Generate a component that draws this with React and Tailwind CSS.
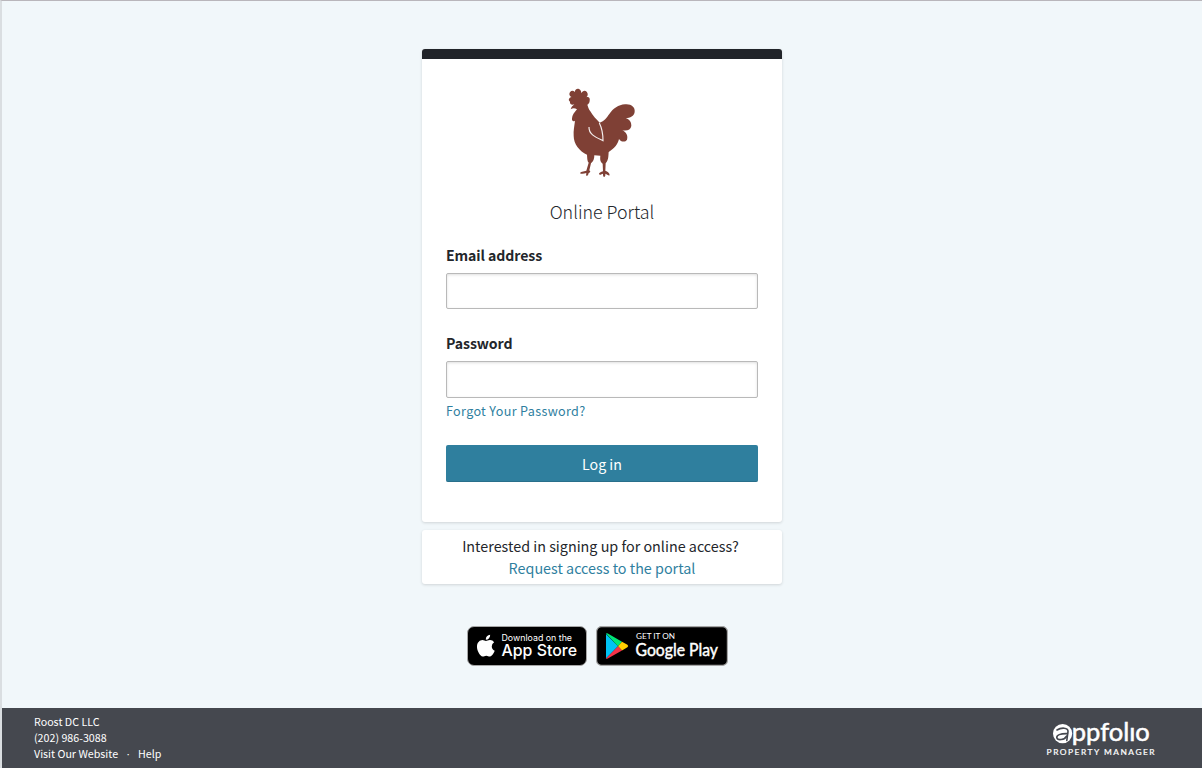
function Rooster() {
  return (
    <svg className="mx-auto block h-[110px] w-[100px]" viewBox="0 0 300 330" aria-label="Roost DC">
      <path
        fill="#7f4035"
        d="M56 94 C58 87 61 84 67 79 C59 83 53 77 54 71 C48 67 50 59 59 57 C52 54 50 46 55 41 C59 37 65 38 68 42 C70 34 75 31 81 33 C86 35 88 40 88 46 C91 38 99 36 104 41 C109 47 108 54 103 58 C110 55 115 61 113 68 C113 74 109 78 106 80 C108 86 110 94 115 100 C123 114 133 124 143 134 C157 130 164 119 172 108 C184 91 199 81 219 79 C237 77 250 87 248 102 C246 115 235 120 221 120 C232 123 239 133 238 144 C236 155 226 160 211 157 C223 162 229 175 225 185 C220 194 206 192 201 183 C198 198 188 211 170 222 C169 234 170 246 161 256 L160 278 C167 281 173 285 173 292 C168 293 165 289 160 287 C161 292 159 296 156 297 C153 295 153 291 153 287 C149 288 145 292 141 289 C140 284 147 282 153 280 L152 257 C144 250 144 244 145 233 L127 232 C127 243 124 251 117 256 L112 277 C117 281 115 284 110 285 C109 290 107 294 104 294 C101 291 103 288 103 285 C97 287 90 289 84 286 C84 281 95 281 103 278 L110 254 C105 248 106 240 105 230 C82 219 65 198 65 173 C64 157 67 145 69 128 C63 132 59 128 60 121 C61 112 66 104 75 94 C67 89 61 91 56 94 Z"
      />
      <path d="M111 147 C110 170 132 178 153 188 C153 168 150 151 142 135" fill="none" stroke="#f4eeee" strokeWidth="3.5" />
    </svg>
  );
}

function Field({ label, type, className }) {
  return (
    <label className="block">
      <span className="block h-[29px] text-[14.1px] leading-[22px] font-semibold tracking-[-0.08px]">{label}</span>
      <input
        type={type}
        className={"block w-full rounded-xs border border-[#b9b9b9] bg-white px-2 shadow-[inset_0_1px_3px_rgba(0,0,0,0.13)] outline-none " + className}
      />
    </label>
  );
}

function AppStoreBadge() {
  return (
    <svg className="h-10 w-[120px]" viewBox="0 0 120 40" aria-label="Download on the App Store">
      <rect x="0.5" y="0.5" width="119" height="39" rx="6.5" fill="#000" stroke="#a6a6a6" />
      <g fill="#fff">
        <path d="M24.77 20.3a4.95 4.95 0 0 1 2.36-4.15 5.07 5.07 0 0 0-3.99-2.16c-1.68-.18-3.31 1-4.16 1-.87 0-2.19-.98-3.61-.95a5.32 5.32 0 0 0-4.47 2.73c-1.94 3.34-.5 8.27 1.35 10.98.93 1.33 2.01 2.81 3.43 2.76 1.39-.06 1.91-.88 3.58-.88 1.67 0 2.14.88 3.6.85 1.49-.03 2.43-1.34 3.33-2.68a10.97 10.97 0 0 0 1.52-3.1 4.78 4.78 0 0 1-2.94-4.4ZM22.04 12.21A4.87 4.87 0 0 0 23.15 8.7a4.96 4.96 0 0 0-3.21 1.66 4.64 4.64 0 0 0-1.14 3.37 4.1 4.1 0 0 0 3.24-1.52Z" />
        <text x="34.5" y="14.6" fontFamily="Inter, sans-serif" fontSize="8.6" fontWeight="400" textLength="70.5" lengthAdjust="spacingAndGlyphs">Download on the</text>
        <text x="34.5" y="30" fontFamily="Inter, sans-serif" fontSize="16.2" fontWeight="500" textLength="75.5" lengthAdjust="spacingAndGlyphs">App Store</text>
      </g>
    </svg>
  );
}

function GooglePlayBadge() {
  return (
    <svg className="h-10 w-[132px]" viewBox="0 0 132 40" aria-label="Get it on Google Play">
      <rect x="0.6" y="0.6" width="130.8" height="38.8" rx="5" fill="#000" stroke="#a6a6a6" strokeWidth="1.2" />
      <path d="M10 8 V32.5 L22 20.2 Z" fill="#00c3f5" />
      <path d="M10 7.5 C10.4 7 11 7 11.8 7.5 L26 15.8 L22 20.2 Z" fill="#00e676" />
      <path d="M26 15.8 L31.4 18.8 Q33 20 31.4 21.3 L26 24.5 L22 20.2 Z" fill="#ffcf00" />
      <path d="M10 32.6 C10.4 33.2 11 33.1 11.8 32.6 L26 24.5 L22 20.2 Z" fill="#f43249" />
      <g fill="#fff">
        <text x="40" y="13.2" fontFamily="Lato, sans-serif" fontSize="8.4" fontWeight="400" textLength="39" lengthAdjust="spacingAndGlyphs">GET IT ON</text>
        <text x="39.5" y="29.8" fontFamily="Lato, sans-serif" fontSize="16.8" fontWeight="400" stroke="#fff" strokeWidth="0.45" textLength="82.5" lengthAdjust="spacingAndGlyphs">Google Play</text>
      </g>
    </svg>
  );
}

function AppfolioLogo() {
  return (
    <svg className="h-[40px] w-[110px] overflow-visible" viewBox="0 0 110 40" aria-label="appfolio Property Manager">
      <circle cx="16.6" cy="14.6" r="9.6" fill="#fff" />
      <g fill="none" stroke="#45484f" strokeWidth="1.6" strokeLinecap="round">
        <path d="M11 11 C15 8.4 22.3 8.2 22 12.6 L20.8 21.5" />
        <path d="M21.4 14.6 C14 14.4 10.6 16.2 10.8 18.6 C11.5 21.9 18.6 21 20.8 17" />
      </g>
      <text x="25.8" y="22" fill="#fff" stroke="#fff" strokeWidth="0.5" fontFamily="Lato, sans-serif" fontSize="24.5" fontWeight="400" textLength="78" lengthAdjust="spacingAndGlyphs">ppfolıo</text>
      <text x="0.6" y="35.6" fill="#fff" stroke="#fff" strokeWidth="0.2" fontFamily="Lato, sans-serif" fontSize="8.4" fontWeight="400" textLength="108">PROPERTY MANAGER</text>
    </svg>
  );
}

export default function App() {
  return (
    <div className="flex h-[768px] w-full flex-col border-t border-l-2 border-t-[#b9b6bb] border-l-[#dadee1] bg-[#f1f7fa] font-['Noto_Sans_CJK_SC','Noto_Sans',sans-serif] text-[#23262b]">
      <main className="flex flex-1 flex-col items-center pt-12">
        <section className="h-[473px] w-[360px] rounded-[3px] bg-white shadow-[0_1px_3px_rgba(0,0,0,0.14)]">
          <div className="h-[10px] rounded-t-[3px] bg-[#212429]" />
          <div className="px-6 pt-[19px]">
            <Rooster />
            <h1 className="mt-3 h-6 text-center text-[17.85px] leading-[22px] font-light">Online Portal</h1>
            <form className="mt-5" onSubmit={(e) => e.preventDefault()}>
              <Field label="Email address" type="email" className="h-9" />
              <div className="h-[23px]" />
              <Field label="Password" type="password" className="h-[37px]" />
              <a href="#forgot" className="block h-[47px] pt-[3px] text-[12.6px] leading-5 tracking-[0.33px] text-[#2f7f9f]">Forgot Your Password?</a>
              <button className="block h-[37px] w-full rounded-xs border-b border-[#286f8b] bg-[#2f7f9e] pt-px text-[14.2px] leading-9 text-white">Log in</button>
            </form>
          </div>
        </section>
        <section className="mt-2 h-[54px] w-[360px] rounded-[3px] bg-white pt-[5px] pr-[3px] text-center text-[14.35px] leading-[22px] shadow-[0_1px_3px_rgba(0,0,0,0.14)]">
          <p>Interested in signing up for online access?</p>
          <a href="#request" className="block pl-[3px] text-[#2f7f9f]">Request access to the portal</a>
        </section>
        <div className="mt-[42px] flex gap-[9px] pr-[9px]">
          <AppStoreBadge />
          <GooglePlayBadge />
        </div>
      </main>
      <footer className="flex h-[60px] items-start justify-between bg-[#45484f] pt-1.5 pr-[46px] pl-8 text-[10.7px] leading-4 text-white">
        <div>
          <p>Roost DC LLC</p>
          <p>(202) 986-3088</p>
          <p className="flex">
            <a href="#website">Visit Our Website</a>
            <span className="w-5 text-center font-['Open_Sans',sans-serif]">·</span>
            <a href="#help">Help</a>
          </p>
        </div>
        <div className="pt-[5px]">
          <AppfolioLogo />
        </div>
      </footer>
    </div>
  );
}
